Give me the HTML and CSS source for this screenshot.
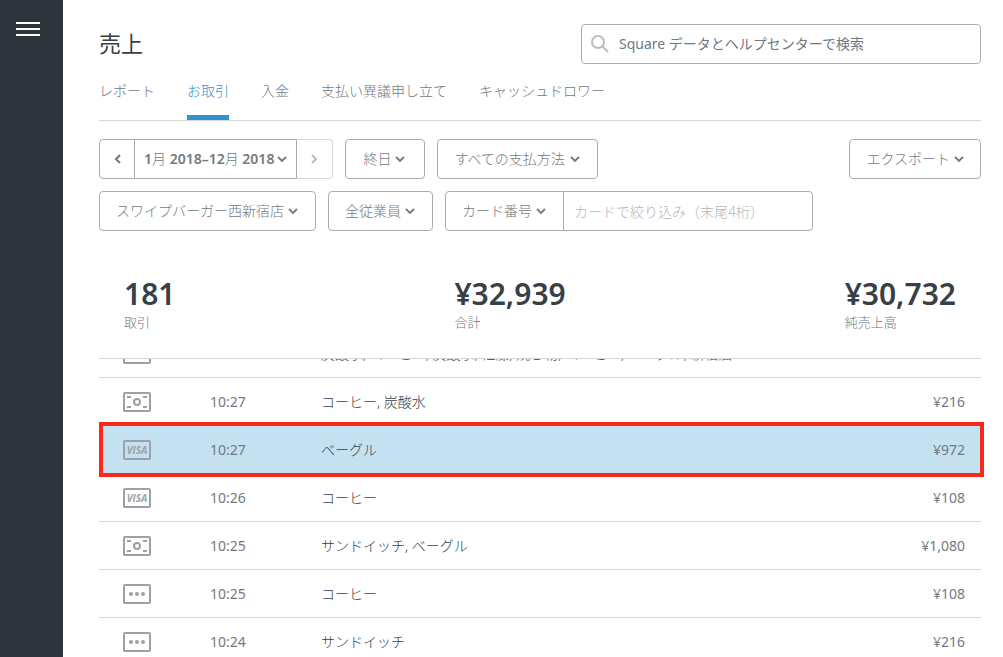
FILE: index.html
```html
<!DOCTYPE html>
<html lang="ja">
<head>
<meta charset="utf-8">
<meta name="viewport" content="width=device-width, initial-scale=1">
<title>売上</title>
<link rel="stylesheet" href="styles.css">
</head>
<body>
<svg class="sprite" aria-hidden="true">
  <symbol id="chevron-down" viewBox="0 0 10 8"><path d="M1 2l4 4 4-4" fill="none" stroke="currentColor" stroke-width="1.8"/></symbol>
  <symbol id="cash" viewBox="0 0 28 20">
    <rect x="1" y="1" width="26" height="18" rx="1" fill="none" stroke="currentColor" stroke-width="2"/>
    <circle cx="14" cy="10" r="3" fill="none" stroke="currentColor" stroke-width="2"/>
    <path d="M4 5h4M20 5h4M4 15h4M20 15h4" stroke="currentColor" stroke-width="2"/>
  </symbol>
  <symbol id="other" viewBox="0 0 28 20">
    <rect x="1" y="1" width="26" height="18" rx="1" fill="none" stroke="currentColor" stroke-width="2"/>
    <g fill="currentColor"><circle cx="8" cy="10" r="2"/><circle cx="14" cy="10" r="2"/><circle cx="20" cy="10" r="2"/></g>
  </symbol>
</svg>
<div class="app">
  <aside class="sidebar">
    <button class="menu" type="button" aria-label="メニュー"><svg width="24" height="14" viewBox="0 0 24 14"><path d="M0 1h24M0 7h24M0 13h24" stroke="currentColor" stroke-width="2"/></svg></button>
  </aside>
  <main class="main">
    <header class="header">
      <h1 class="title">売上</h1>
      <label class="search">
        <svg width="18" height="18" viewBox="0 0 18 18" aria-hidden="true"><g fill="none" stroke="currentColor" stroke-width="2"><circle cx="7" cy="7" r="6"/><path d="M11 11l6 6"/></g></svg>
        <input type="search" aria-label="検索" placeholder="Square データとヘルプセンターで検索">
      </label>
    </header>
    <nav class="tabs">
      <a class="tab" href="#reports">レポート</a>
      <a class="tab tab-active" href="#transactions" aria-current="page">お取引</a>
      <a class="tab" href="#deposits">入金</a>
      <a class="tab" href="#disputes">支払い異議申し立て</a>
      <a class="tab" href="#drawers">キャッシュドロワー</a>
    </nav>
    <section class="filters">
      <div class="filter-row">
        <div class="group">
          <button class="btn btn-step" type="button" aria-label="前へ"><svg width="8" height="10" viewBox="0 0 8 10"><path d="M7 1L3 5l4 4" fill="none" stroke="currentColor" stroke-width="2"/></svg></button>
          <button class="btn btn-date" type="button"><span>1<span class="kanji">月</span> 2018–12<span class="kanji">月</span> 2018</span><svg width="10" height="8"><use href="#chevron-down"/></svg></button>
          <button class="btn btn-step" type="button" aria-label="次へ" disabled><svg width="8" height="10" viewBox="0 0 8 10"><path d="M1 1l4 4-4 4" fill="none" stroke="currentColor" stroke-width="2"/></svg></button>
        </div>
        <select class="btn select select-time" aria-label="時間帯"><option>終日</option></select>
        <select class="btn select" aria-label="支払方法"><option>すべての支払方法</option></select>
        <button class="btn btn-export" type="button">エクスポート<svg width="10" height="8"><use href="#chevron-down"/></svg></button>
      </div>
      <div class="filter-row">
        <select class="btn select" aria-label="店舗"><option>スワイプバーガー西新宿店</option></select>
        <select class="btn select" aria-label="従業員"><option>全従業員</option></select>
        <div class="group">
          <select class="btn select" aria-label="絞り込みの種類"><option>カード番号</option></select>
          <input class="btn card-input" type="text" aria-label="カード番号" placeholder="カードで絞り込み（末尾4桁）">
        </div>
      </div>
    </section>
    <dl class="stats">
      <div class="stat"><dd>181</dd><dt>取引</dt></div>
      <div class="stat"><dd>¥32,939</dd><dt>合計</dt></div>
      <div class="stat"><dd>¥30,732</dd><dt>純売上高</dt></div>
    </dl>
    <section class="list">
      <table class="table">
        <tbody>
          <tr><td class="pay"><svg width="28" height="20"><use href="#other"/></svg></td><td class="time">10:28</td><td class="item">炭酸水, コーヒー, 炭酸水, 佐藤, 焼き物, コーヒー, ベーグル, 新宿店</td><td class="amount">¥540</td></tr>
          <tr><td class="pay"><svg width="28" height="20"><use href="#cash"/></svg></td><td class="time">10:27</td><td class="item">コーヒー, 炭酸水</td><td class="amount">¥216</td></tr>
          <tr class="selected"><td class="pay"><span class="visa">VISA</span></td><td class="time">10:27</td><td class="item">ベーグル</td><td class="amount">¥972</td></tr>
          <tr><td class="pay"><span class="visa">VISA</span></td><td class="time">10:26</td><td class="item">コーヒー</td><td class="amount">¥108</td></tr>
          <tr><td class="pay"><svg width="28" height="20"><use href="#cash"/></svg></td><td class="time">10:25</td><td class="item">サンドイッチ, ベーグル</td><td class="amount">¥1,080</td></tr>
          <tr><td class="pay"><svg width="28" height="20"><use href="#other"/></svg></td><td class="time">10:25</td><td class="item">コーヒー</td><td class="amount">¥108</td></tr>
          <tr><td class="pay"><svg width="28" height="20"><use href="#other"/></svg></td><td class="time">10:24</td><td class="item">サンドイッチ</td><td class="amount">¥216</td></tr>
        </tbody>
      </table>
    </section>
  </main>
</div>
</body>
</html>
```
FILE: styles.css
```css
:root {
  --ink: #373f47;
  --gray: #73797e;
  --line: #d5d7d9;
  --border: #a9adb2;
  --blue: #3095cb;
}

* { box-sizing: border-box; }

body {
  margin: 0;
  background: #fff;
  color: var(--gray);
  font: 300 14px/20px "Noto Sans", "Noto Sans CJK JP", sans-serif;
}

button, input, select { font: inherit; color: inherit; }

.sprite { position: absolute; width: 0; height: 0; }

.app { display: flex; height: 100vh; overflow: hidden; }

.sidebar {
  flex: none;
  width: 63px;
  padding: 22px 16px;
  background: #2d343c;
}

.menu {
  display: block;
  padding: 0;
  border: 0;
  background: none;
  color: #fff;
}
.menu svg { display: block; }

.main {
  flex: 1;
  min-width: 0;
  display: flex;
  flex-direction: column;
  padding: 24px 22px 0 36px;
}

.header { display: flex; justify-content: space-between; align-items: flex-start; }

.title { margin: 0; font-size: 22px; line-height: 38px; font-weight: 400; color: var(--ink); }

.search {
  display: flex;
  align-items: center;
  gap: 10px;
  width: 400px;
  height: 40px;
  padding: 0 9px;
  border: 1px solid var(--border);
  border-radius: 4px;
}
.search svg { flex: none; color: #b9bec3; }
.search input {
  flex: 1;
  min-width: 0;
  padding: 0;
  border: 0;
  outline: 0;
  background: none;
  font-weight: 400;
}
.search input::placeholder { color: var(--gray); opacity: 1; }

.tabs {
  display: flex;
  gap: 32px;
  height: 57px;
  border-bottom: 1px solid var(--line);
}
.tab {
  height: 56px;
  padding-top: 17px;
  color: var(--gray);
  text-decoration: none;
  white-space: nowrap;
}
.tab-active { color: var(--blue); border-bottom: 5px solid var(--blue); }

.filters { display: flex; flex-direction: column; gap: 12px; padding-top: 18px; }
.filter-row { display: flex; gap: 12px; }

.btn {
  display: flex;
  align-items: center;
  justify-content: center;
  gap: 4px;
  height: 40px;
  margin: 0;
  padding: 0 17px;
  border: 1px solid var(--border);
  border-radius: 4px;
  background-color: #fff;
  white-space: nowrap;
}

.select {
  appearance: none;
  padding: 0 31px 0 16px;
  background-image: url("data:image/svg+xml,%3Csvg xmlns='http://www.w3.org/2000/svg' width='10' height='8' viewBox='0 0 10 8'%3E%3Cpath d='M1 2l4 4 4-4' fill='none' stroke='%2373797e' stroke-width='1.8'/%3E%3C/svg%3E");
  background-repeat: no-repeat;
  background-position: right 17px center;
}
.select-time { min-width: 80px; background-position: right 19px center; padding-left: 17px; }

.group { display: flex; }
.group .btn:not(:first-child) { margin-left: -1px; border-top-left-radius: 0; border-bottom-left-radius: 0; }
.group .btn:not(:last-child) { border-top-right-radius: 0; border-bottom-right-radius: 0; }

.btn-step { width: 36px; padding: 0; }
.btn-step:disabled { width: 37px; color: #b9bcbf; border-color: var(--line); border-left-color: var(--border); }
.btn-date { gap: 3px; padding: 0 9px; font-weight: 600; }
.kanji { font-weight: 300; }
.btn-export { margin-left: auto; padding: 0 16px; }

.card-input { width: 250px; padding: 0 10px; }
.card-input::placeholder { color: #b4b7ba; opacity: 1; }

.stats {
  display: flex;
  justify-content: space-between;
  margin: 0;
  padding: 44px 25px 26px;
  border-bottom: 1px solid var(--line);
}
.stat { display: flex; flex-direction: column; }
.stat dd { margin: 0; font-size: 30px; line-height: 38px; font-weight: 600; color: var(--ink); }
.stat dt { font-size: 13px; line-height: 19px; }

.list {
  flex: 1;
  min-height: 0;
  clip-path: inset(0 -8px 0 0);
}

.table {
  width: 100%;
  margin-top: -29px;
  border-spacing: 0;
}
.table td { height: 48px; padding: 0; border-bottom: 1px solid var(--line); }
.table .pay { width: 111px; padding-left: 24px; color: #9ca1a6; }
.pay svg { display: block; }
.time { width: 111px; font-weight: 400; }
.item { color: var(--ink); }
.table .amount { padding-right: 16px; text-align: right; font-weight: 400; }

.visa {
  display: flex;
  align-items: center;
  justify-content: center;
  width: 28px;
  height: 20px;
  border: 2px solid currentColor;
  border-radius: 2px;
  font: italic 700 10px/12px "Open Sans", sans-serif;
}

.selected { position: relative; background: #c3e1f1; }
.selected .pay::before {
  content: "";
  position: absolute;
  inset: -4px -3px -3px 0;
  border: 4px solid #fb291c;
}
```
